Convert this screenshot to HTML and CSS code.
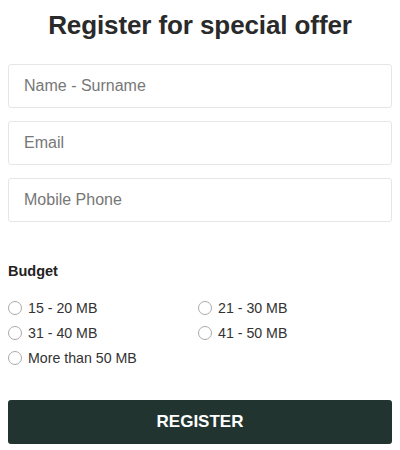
FILE: index.html
```html
<!DOCTYPE html>
<html>
<head>
<meta charset="utf-8">
<link rel="stylesheet" href="styles.css">
</head>
<body>
<form class="form">
  <h1 class="title">Register for special offer</h1>
  <div class="fields">
    <input class="field" type="text" placeholder="Name - Surname">
    <input class="field" type="text" placeholder="Email">
    <input class="field" type="text" placeholder="Mobile Phone">
  </div>
  <div class="budget">
    <div class="label">Budget</div>
    <div class="options">
      <label class="option"><span class="radio"></span>15 - 20 MB</label>
      <label class="option"><span class="radio"></span>21 - 30 MB</label>
      <label class="option"><span class="radio"></span>31 - 40 MB</label>
      <label class="option"><span class="radio"></span>41 - 50 MB</label>
      <label class="option"><span class="radio"></span>More than 50 MB</label>
    </div>
  </div>
  <button class="submit" type="button">REGISTER</button>
</form>
</body>
</html>
```
FILE: styles.css
```css
html, body { margin: 0; padding: 0; background: #fff; }
body { padding: 0 8px; font-family: "Liberation Sans", Arial, sans-serif; }
.form { display: flex; flex-direction: column; }
.title {
  margin: 9px 0 0;
  font-size: 26px;
  line-height: 32px;
  font-weight: bold;
  color: #2a2a2a;
  text-align: center;
  letter-spacing: -0.1px;
}
.fields { display: flex; flex-direction: column; gap: 13px; margin-top: 23px; }
.field {
  box-sizing: border-box;
  width: 100%;
  height: 44px;
  margin: 0;
  padding: 0 15px;
  border: 1px solid #e6e6e6;
  border-radius: 3px;
  font-family: "Liberation Sans", Arial, sans-serif;
  font-size: 16px;
  color: #555;
  outline: none;
}
.field::placeholder { color: #777; }
.budget { margin-top: 41px; }
.label { font-size: 14.5px; font-weight: bold; color: #222; line-height: 16px; }
.options {
  display: grid;
  grid-template-columns: 190px 1fr;
  row-gap: 9px;
  margin-top: 21px;
}
.option {
  display: flex;
  align-items: center;
  gap: 6px;
  font-size: 14.2px;
  line-height: 16px;
  color: #333;
}
.radio {
  box-sizing: border-box;
  width: 14px;
  height: 14px;
  border: 1px solid #aaa;
  border-radius: 50%;
  background: #fff;
}
.submit {
  margin-top: 34px;
  height: 44px;
  border: none;
  border-radius: 3px;
  background: #223430;
  color: #fff;
  font-family: "Liberation Sans", Arial, sans-serif;
  font-size: 17px;
  font-weight: bold;
  letter-spacing: 0;
}
```
